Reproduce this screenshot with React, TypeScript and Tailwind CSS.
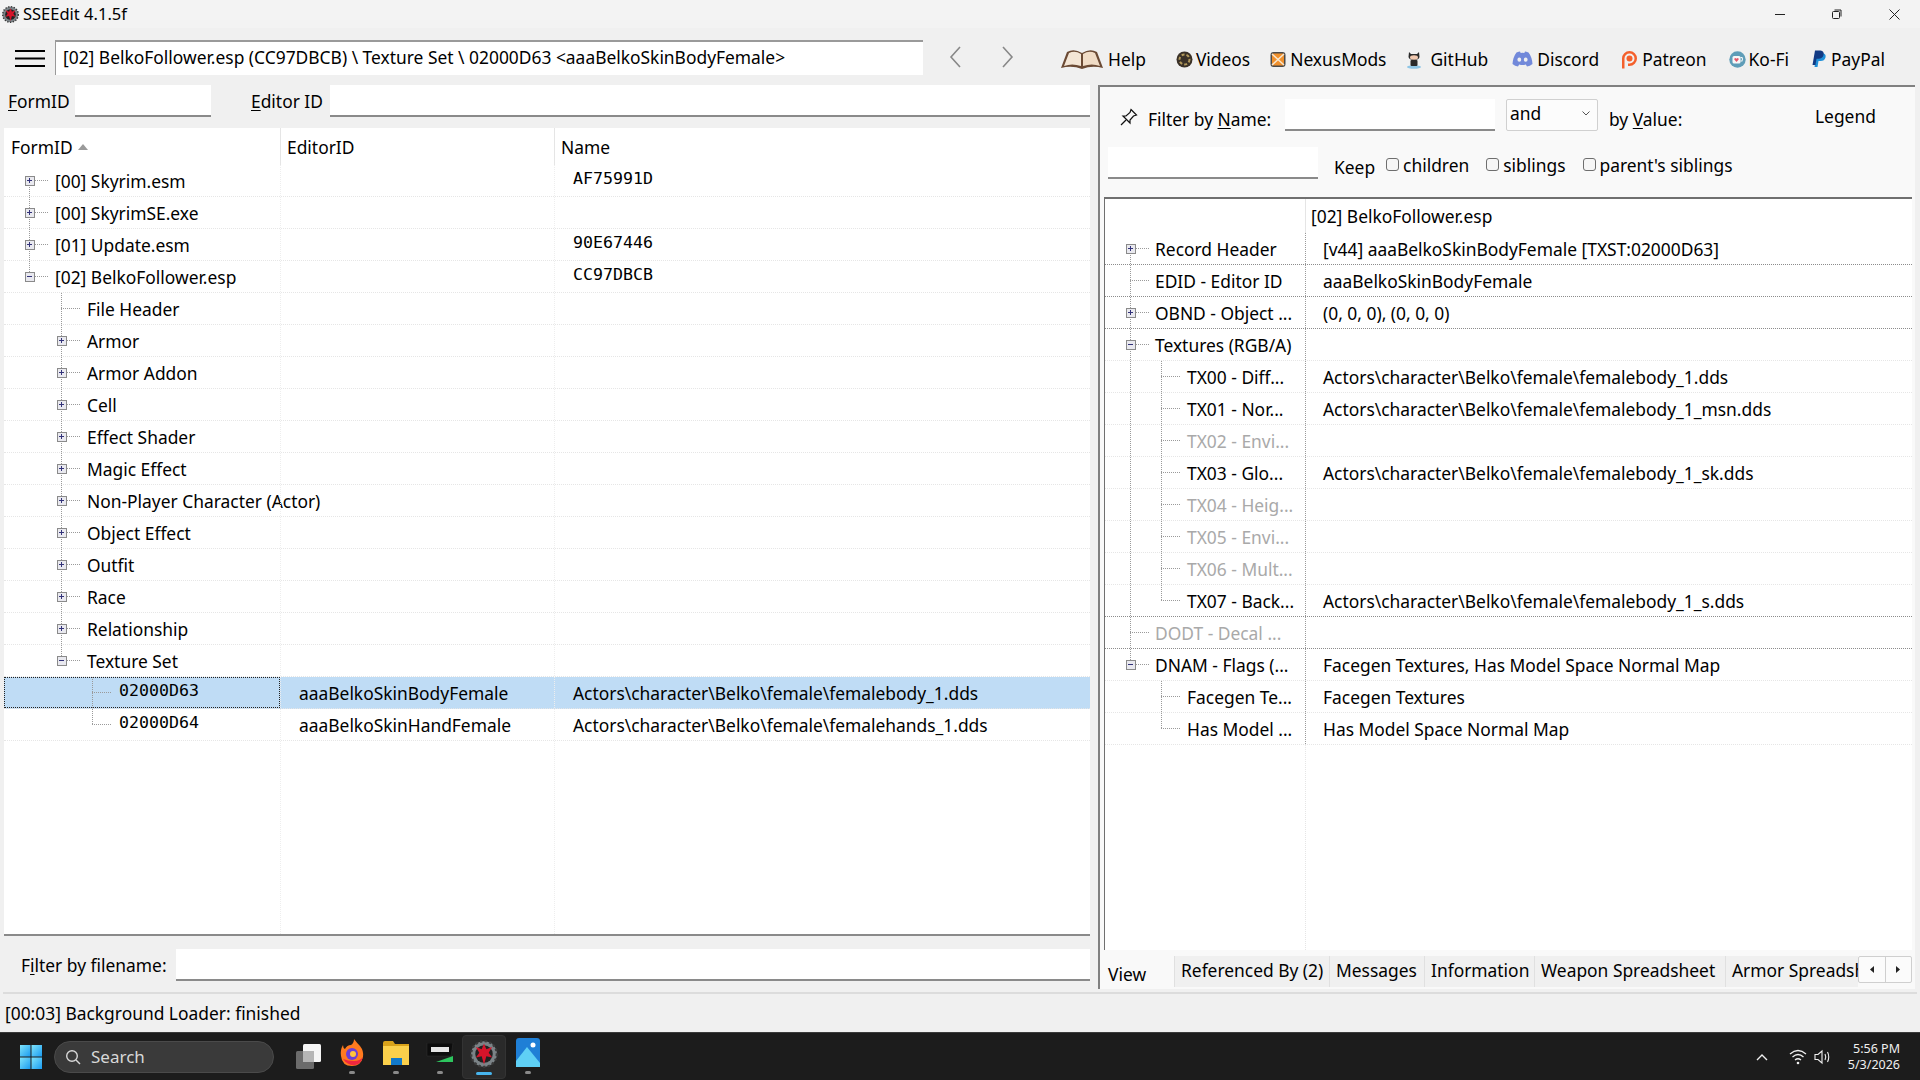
import type { ReactNode } from 'react';

const FONT = "font-['Noto_Sans','Open_Sans',sans-serif]";

type NodeRow = {
  label: string;
  node: number;
  box?: '+' | '-';
  up?: boolean;
  down?: boolean;
  trunk?: number[];
  editor?: string;
  value?: string;
  mono?: boolean;
  dim?: boolean;
  strong?: boolean;
  selected?: boolean;
};

const LEFT_ROWS: NodeRow[] = [
  { label: '[00] Skyrim.esm', node: 25, box: '+', down: true, value: 'AF75991D', mono: true },
  { label: '[00] SkyrimSE.exe', node: 25, box: '+', up: true, down: true },
  { label: '[01] Update.esm', node: 25, box: '+', up: true, down: true, value: '90E67446', mono: true },
  { label: '[02] BelkoFollower.esp', node: 25, box: '-', up: true, value: 'CC97DBCB', mono: true },
  { label: 'File Header', node: 57, up: true, down: true },
  { label: 'Armor', node: 57, box: '+', up: true, down: true },
  { label: 'Armor Addon', node: 57, box: '+', up: true, down: true },
  { label: 'Cell', node: 57, box: '+', up: true, down: true },
  { label: 'Effect Shader', node: 57, box: '+', up: true, down: true },
  { label: 'Magic Effect', node: 57, box: '+', up: true, down: true },
  { label: 'Non-Player Character (Actor)', node: 57, box: '+', up: true, down: true },
  { label: 'Object Effect', node: 57, box: '+', up: true, down: true },
  { label: 'Outfit', node: 57, box: '+', up: true, down: true },
  { label: 'Race', node: 57, box: '+', up: true, down: true },
  { label: 'Relationship', node: 57, box: '+', up: true, down: true },
  { label: 'Texture Set', node: 57, box: '-', up: true },
];

const RIGHT_ROWS: NodeRow[] = [
  { label: 'Record Header', node: 25, box: '+', down: true, strong: true, value: '[v44] aaaBelkoSkinBodyFemale [TXST:02000D63]' },
  { label: 'EDID - Editor ID', node: 25, up: true, down: true, strong: true, value: 'aaaBelkoSkinBodyFemale' },
  { label: 'OBND - Object ...', node: 25, box: '+', up: true, down: true, strong: true, value: '(0, 0, 0), (0, 0, 0)' },
  { label: 'Textures (RGB/A)', node: 25, box: '-', up: true, down: true },
  { label: 'TX00 - Diff...', node: 56, up: true, down: true, trunk: [25], value: 'Actors\\character\\Belko\\female\\femalebody_1.dds' },
  { label: 'TX01 - Nor...', node: 56, up: true, down: true, trunk: [25], value: 'Actors\\character\\Belko\\female\\femalebody_1_msn.dds' },
  { label: 'TX02 - Envi...', node: 56, up: true, down: true, trunk: [25], dim: true },
  { label: 'TX03 - Glo...', node: 56, up: true, down: true, trunk: [25], value: 'Actors\\character\\Belko\\female\\femalebody_1_sk.dds' },
  { label: 'TX04 - Heig...', node: 56, up: true, down: true, trunk: [25], dim: true },
  { label: 'TX05 - Envi...', node: 56, up: true, down: true, trunk: [25], dim: true },
  { label: 'TX06 - Mult...', node: 56, up: true, down: true, trunk: [25], dim: true },
  { label: 'TX07 - Back...', node: 56, up: true, trunk: [25], strong: true, value: 'Actors\\character\\Belko\\female\\femalebody_1_s.dds' },
  { label: 'DODT - Decal ...', node: 25, up: true, down: true, dim: true, strong: true },
  { label: 'DNAM - Flags (...', node: 25, box: '-', up: true, value: 'Facegen Textures, Has Model Space Normal Map' },
  { label: 'Facegen Te...', node: 56, up: true, down: true, value: 'Facegen Textures' },
  { label: 'Has Model ...', node: 56, up: true, value: 'Has Model Space Normal Map' },
];

function Gutter({ row, width }: { row: NodeRow; width: number }) {
  const { node, box, up, down, trunk } = row;
  return (
    <svg width={width} height={32} className="shrink-0" shapeRendering="crispEdges">
      <g stroke="#9a9a9a" strokeDasharray="1 1" fill="none">
        {trunk?.map(x => <line key={x} x1={x + 0.5} x2={x + 0.5} y1={0} y2={32} />)}
        {up && <line x1={node + 0.5} x2={node + 0.5} y1={0} y2={16} />}
        {down && <line x1={node + 0.5} x2={node + 0.5} y1={16} y2={32} />}
        <line x1={node} x2={node + 20} y1={15.5} y2={15.5} />
      </g>
      {box && (
        <g>
          <rect x={node - 4} y={11} width={9} height={9} fill="#e9e9ef" stroke="#8a8a8a" />
          <line x1={node - 2} x2={node + 3} y1={15.5} y2={15.5} stroke="#33337a" />
          {box === '+' && <line x1={node + 0.5} x2={node + 0.5} y1={13} y2={18} stroke="#33337a" />}
        </g>
      )}
    </svg>
  );
}

function LeftRow({ row }: { row: NodeRow }) {
  return (
    <div className="flex h-[32px] border-b border-dotted border-[#e6e6e6]">
      <div className="flex w-[276px] shrink-0 items-center whitespace-nowrap">
        <Gutter row={row} width={row.node === 25 ? 51 : 83} />
        <span>{row.label}</span>
      </div>
      <div className="w-[274px] shrink-0 border-l border-dotted border-[#eeeeee]" />
      <div className="flex flex-1 items-center border-l border-dotted border-[#eeeeee] pl-[18px] pb-[3px] font-['DejaVu_Sans_Mono',monospace] text-[16.6px]">
        {row.value}
      </div>
    </div>
  );
}

function RecordRow({ id, editor, value, selected }: { id: string; editor: string; value: string; selected?: boolean }) {
  const gutter: NodeRow = { label: id, node: 88, up: true, down: selected };
  return (
    <div className={`flex h-[32px] border-b border-dotted border-[#e6e6e6] ${selected ? 'bg-[#bfdcf5]' : ''}`}>
      <div className={`flex w-[276px] shrink-0 items-center ${selected ? 'outline outline-1 -outline-offset-1 outline-dotted outline-[#222]' : ''}`}>
        <Gutter row={gutter} width={115} />
        <span className="pb-[3px] font-['DejaVu_Sans_Mono',monospace] text-[16.6px]">{id}</span>
      </div>
      <div className="flex w-[274px] shrink-0 items-center border-l border-dotted border-[#eeeeee] pl-[18px]">{editor}</div>
      <div className="flex flex-1 items-center border-l border-dotted border-[#eeeeee] pl-[18px]">{value}</div>
    </div>
  );
}

function ViewRow({ row }: { row: NodeRow }) {
  return (
    <div className={`flex h-[32px] border-b border-dotted ${row.strong ? 'border-[#8c8c8c]' : 'border-[#e6e6e6]'}`}>
      <div className={`flex w-[200px] shrink-0 items-center whitespace-nowrap ${row.dim ? 'text-[#a9a9a9]' : ''}`}>
        <Gutter row={row} width={row.node === 25 ? 50 : 82} />
        <span>{row.label}</span>
      </div>
      <div className="flex flex-1 items-center whitespace-nowrap border-l border-dotted border-[#9a9a9a] pl-[17px]">{row.value}</div>
    </div>
  );
}

function Checkbox({ label, className }: { label: string; className: string }) {
  return (
    <div className={`flex items-center ${className}`}>
      <span className="mb-[2px] h-[13px] w-[13px] rounded-[3px] border border-[#6e6e6e] bg-[#f6f6f6]" />
      <span className="ml-[4px]">{label}</span>
    </div>
  );
}

function ToolbarLink({ icon, label, className }: { icon: ReactNode; label: string; className: string }) {
  return (
    <div className={`flex items-center ${className}`}>
      {icon}
      <span>{label}</span>
    </div>
  );
}

function BookIcon() {
  return (
    <svg width="44" height="22" viewBox="0 0 44 22" className="mr-[4px]">
      <path d="M1 20 L7 4 Q14 0 22 5 Q30 0 37 4 L43 20 Q32 17 22 21 Q12 17 1 20Z" fill="#6b4a34" />
      <path d="M4 18 L9 5 Q15 2 21 6 L21 18 Q12 15 4 18Z" fill="#f4e6d6" />
      <path d="M40 18 L35 5 Q29 2 23 6 L23 18 Q32 15 40 18Z" fill="#f0dcc6" />
    </svg>
  );
}

function GpIcon() {
  return (
    <svg width="17" height="17" viewBox="0 0 17 17" className="mr-[3px]">
      <circle cx="8.5" cy="8.5" r="8" fill="#3a3128" />
      <circle cx="8.5" cy="8.5" r="5" fill="none" stroke="#b39a5c" strokeWidth="2" strokeDasharray="3 2" />
    </svg>
  );
}

function NexusIcon() {
  return (
    <svg width="16" height="17" viewBox="0 0 16 17" className="mr-[4px]">
      <rect x="0.5" y="1" width="15" height="15" rx="3" fill="#4a4a4a" />
      <rect x="2" y="2.5" width="12" height="12" rx="1" fill="#f0902c" />
      <path d="M2 3 L8 8.5 L14 3 M2 14 L8 8.5 L14 14" stroke="#f7e6cf" strokeWidth="1.6" fill="none" />
    </svg>
  );
}

function GithubIcon() {
  return (
    <svg width="20" height="20" viewBox="0 0 20 20" className="mr-[6px]">
      <ellipse cx="10" cy="18" rx="7" ry="1.8" fill="#8fc6e6" />
      <path d="M5 3 L7 5 H13 L15 3 L15.5 8 Q15 11 10 11 Q5 11 4.5 8Z" fill="#2a2a2a" />
      <ellipse cx="10" cy="8.5" rx="4" ry="2.2" fill="#f1c9b0" />
      <rect x="6.5" y="11" width="7" height="6" rx="1" fill="#2a2a2a" />
    </svg>
  );
}

function DiscordIcon() {
  return (
    <svg width="21" height="16" viewBox="0 0 21 16" className="mr-[4px]">
      <path d="M4.5 1.5 Q7 .5 8 .5 L8.7 2 Q10.5 1.7 12.3 2 L13 .5 Q14 .5 16.5 1.5 Q20 6 20.5 13 Q18 15 15 15.5 L13.8 13.5 Q10.5 14.5 7.2 13.5 L6 15.5 Q3 15 .5 13 Q1 6 4.5 1.5Z" fill="#7289da" />
      <ellipse cx="7.3" cy="8.7" rx="1.9" ry="2.1" fill="#f0f0f0" />
      <ellipse cx="13.7" cy="8.7" rx="1.9" ry="2.1" fill="#f0f0f0" />
    </svg>
  );
}

function PatreonIcon() {
  return (
    <svg width="17" height="19" viewBox="0 0 17 19" className="mr-[4px]">
      <path d="M1 18.5 V8.5 A7.5 7.5 0 1 1 8.5 16 H7 V13.5 H8.5 A5 5 0 1 0 3.5 8.5 V18.5Z" fill="#f4602c" />
      <circle cx="8.5" cy="8.5" r="3" fill="#f4602c" />
    </svg>
  );
}

function KofiIcon() {
  return (
    <svg width="17" height="17" viewBox="0 0 17 17" className="mr-[3px]">
      <circle cx="8.5" cy="8.5" r="8.2" fill="#5f9db8" />
      <rect x="3.5" y="5" width="8" height="7.5" rx="1.5" fill="#f7f7f7" />
      <path d="M11.5 6.5 H13 Q14.2 8.5 13 10 H11.5" stroke="#f7f7f7" strokeWidth="1.2" fill="none" />
      <path d="M7.5 11 L5.3 8.6 Q5 7 6.4 7 L7.5 7.8 L8.6 7 Q10 7 9.7 8.6Z" fill="#e5566a" />
    </svg>
  );
}

function PaypalIcon() {
  return (
    <svg width="15" height="18" viewBox="0 0 15 18" className="mr-[4px]">
      <path d="M5 3 H10 Q14.5 3.5 13.5 7.5 Q12.5 11 8.5 11 H6.5 L5.5 17 H2.5Z" fill="#1f8fd8" />
      <path d="M3 0.5 H8.5 Q12.5 1 11.5 5 Q10.5 8.8 6.5 8.8 H4.5 L3.5 15 H0.5Z" fill="#123a84" />
    </svg>
  );
}

function AppIcon({ size }: { size: number }) {
  return (
    <svg width={size} height={size} viewBox="0 0 24 24">
      <circle cx="12" cy="12" r="11" fill="#7b8387" />
      <circle cx="12" cy="12" r="11" fill="none" stroke="#3a3a3a" strokeWidth="2" strokeDasharray="2 2" />
      <circle cx="12" cy="12" r="7.5" fill="#222" />
      <path d="M12 3 L14 8 L19 6 L16 11 L19 15 L14 14 L12 21 L10 14 L5 15 L8 11 L5 6 L10 8Z" fill="#d6142a" />
    </svg>
  );
}

function Taskbar() {
  return (
    <div className="flex h-[48px] shrink-0 items-center border-t border-[#3a3a3a] bg-[#1c1c1c] text-white">
      <svg width="20" height="0" className="shrink-0" />
      <svg width="22" height="24" viewBox="0 0 22 24" className="mb-[0px] shrink-0">
        <defs>
          <linearGradient id="win" x1="0" y1="0" x2="1" y2="1">
            <stop offset="0" stopColor="#7fe4fb" />
            <stop offset="1" stopColor="#1a9bf0" />
          </linearGradient>
        </defs>
        <rect x="0" y="0" width="10.5" height="11.5" fill="url(#win)" />
        <rect x="11.5" y="0" width="10.5" height="11.5" fill="url(#win)" />
        <rect x="0" y="12.5" width="10.5" height="11.5" fill="url(#win)" />
        <rect x="11.5" y="12.5" width="10.5" height="11.5" fill="url(#win)" />
      </svg>
      <div className="ml-[12px] flex h-[32px] w-[220px] shrink-0 items-center rounded-full border border-[#4a4a4a] bg-[#3a3a3a] pl-[10px] text-[17px] text-[#d8d8d8]">
        <svg width="16" height="16" viewBox="0 0 16 16" fill="none" stroke="#d8d8d8" strokeWidth="1.4">
          <circle cx="7" cy="7" r="5.3" />
          <path d="M11 11 L15 15" />
        </svg>
        <span className="ml-[10px]">Search</span>
      </div>
      {/* task view */}
      <div className="ml-[12px] flex h-[44px] w-[44px] shrink-0 items-center justify-center">
        <svg width="25" height="25" viewBox="0 0 25 25">
          <rect x="0" y="7" width="18" height="18" rx="1.5" fill="#6b6b6b" />
          <rect x="7" y="0" width="18" height="18" rx="1.5" fill="#f5f5f5" />
          <rect x="7" y="7" width="11" height="11" fill="#b5b5b5" />
        </svg>
      </div>
      <TaskItem>
        <svg width="24" height="28" viewBox="0 0 24 28">
          <path d="M14 0 Q17 4 20 7 Q24 12 23 18 Q21 27 12 27 Q2 27 1 17 Q0 11 3 6 Q3 9 5 10 Q7 6 11 6 Q14 4 14 0Z" fill="#ff7a1f" />
          <path d="M3 20 Q8 27 15 26 Q21 25 23 18 Q20 22 14 22 Q8 22 3 20Z" fill="#f0273f" />
          <circle cx="12" cy="15" r="6" fill="#6a3fd6" />
          <circle cx="13" cy="15" r="3" fill="#ffc43c" />
        </svg>
      </TaskItem>
      <TaskItem>
        <svg width="26" height="24" viewBox="0 0 26 24">
          <path d="M0 2 Q0 0 2 0 H10 L12 3 H26 V10 H0Z" fill="#d9a21a" />
          <rect x="0" y="5" width="26" height="19" fill="#fbd04b" />
          <rect x="8" y="17" width="11" height="7" fill="#1279c9" />
        </svg>
      </TaskItem>
      <TaskItem>
        <svg width="28" height="20" viewBox="0 0 28 20">
          <path d="M1 0 H27 L25 13 L1 13Z" fill="#0d0d0d" stroke="#333" strokeWidth="0.5" />
          <rect x="5" y="4" width="18" height="5" fill="#e6e6e6" />
          <path d="M10 19 L27 13 V19Z" fill="#2dc55e" />
        </svg>
      </TaskItem>
      <TaskItem active>
        <AppIcon size={28} />
      </TaskItem>
      <TaskItem>
        <svg width="24" height="29" viewBox="0 0 24 29">
          <rect width="24" height="29" rx="3" fill="#1f7fd6" />
          <path d="M0 23 L11 9 L24 25 V29 H0Z" fill="#5fd0f5" />
          <circle cx="17" cy="7" r="2.5" fill="#ffffff" />
        </svg>
      </TaskItem>
      <div className="flex-1" />
      <svg width="12" height="8" viewBox="0 0 12 8" fill="none" stroke="#f0f0f0" strokeWidth="1.4">
        <path d="M1 7 L6 2 L11 7" />
      </svg>
      <svg width="18" height="16" viewBox="0 0 18 16" fill="none" stroke="#f0f0f0" strokeWidth="1.3" className="ml-[21px]">
        <path d="M1 5 Q9 -2 17 5 M3.5 8 Q9 3 14.5 8 M6 11 Q9 8.5 12 11" />
        <circle cx="9" cy="14" r="1.3" fill="#f0f0f0" stroke="none" />
      </svg>
      <svg width="18" height="16" viewBox="0 0 18 16" fill="none" stroke="#f0f0f0" strokeWidth="1.1" className="ml-[7px]">
        <path d="M1 5.5 H4 L8 2 V14 L4 10.5 H1Z M11 5 Q12.5 8 11 11 M13.5 3 Q16 8 13.5 13" />
      </svg>
      <div className="ml-[16px] mr-[20px] flex flex-col items-end text-[12.5px] leading-[16px] text-[#f0f0f0]">
        <span>5:56 PM</span>
        <span>5/3/2026</span>
      </div>
    </div>
  );
}

function TaskItem({ children, active }: { children: ReactNode; active?: boolean }) {
  return (
    <div className={`flex h-[44px] w-[44px] shrink-0 flex-col items-center rounded-[4px] ${active ? 'border border-[#333] bg-[#2a2a2a]' : ''}`}>
      <div className="flex h-[36px] items-center">{children}</div>
      <span className={`h-[3px] rounded-full ${active ? 'w-[16px] bg-[#47b5ee]' : 'w-[6px] bg-[#8a8a8a]'}`} />
    </div>
  );
}

export default function App() {
  return (
    <div className={`flex h-[1080px] w-[1920px] flex-col overflow-hidden bg-[#f0f0f0] text-[17.4px] leading-[24px] text-black ${FONT}`}>
      {/* Title bar */}
      <div className="flex h-[28px] shrink-0 items-center bg-[#f3f3f3] pl-[2px]">
        <AppIcon size={17} />
        <span className="ml-[4px] text-[16.5px]">SSEEdit 4.1.5f</span>
        <div className="flex-1" />
        <div className="mr-[20px] flex items-center gap-[47px]">
          <svg width="10" height="10" viewBox="0 0 10 10" stroke="#222" fill="none"><path d="M0 5.5 H10" /></svg>
          <svg width="10" height="10" viewBox="0 0 10 10" stroke="#222" fill="none"><rect x="0.5" y="2.5" width="7" height="7" rx="1" /><path d="M2.5 1 H9 V7.5" /></svg>
          <svg width="11" height="11" viewBox="0 0 11 11" stroke="#222" fill="none"><path d="M.5 .5 L10.5 10.5 M10.5 .5 L.5 10.5" /></svg>
        </div>
      </div>

      {/* Toolbar */}
      <div className="flex h-[52px] shrink-0 items-start pt-[12px]">
        <svg width="30" height="17" viewBox="0 0 30 17" className="ml-[15px] mt-[10px] shrink-0">
          <path d="M0 1 H30 M0 8.5 H30 M0 16 H30" stroke="#000" strokeWidth="2" />
        </svg>
        <div className="ml-[10px] flex h-[35px] w-[868px] shrink-0 items-center border-t-2 border-l border-[#9a9a9a] bg-white pb-[3px] pl-[7px]">
          [02] BelkoFollower.esp (CC97DBCB) \ Texture Set \ 02000D63 &lt;aaaBelkoSkinBodyFemale&gt;
        </div>
        <svg width="12" height="22" viewBox="0 0 12 22" fill="none" stroke="#888" strokeWidth="1.6" className="ml-[26px] mt-[6px] shrink-0"><path d="M11 1 L2 11 L11 21" /></svg>
        <svg width="12" height="22" viewBox="0 0 12 22" fill="none" stroke="#888" strokeWidth="1.6" className="ml-[41px] mt-[6px] shrink-0"><path d="M1 1 L10 11 L1 21" /></svg>
        <div className="mt-[1px] ml-[46px] flex h-[36px] items-center">
          <ToolbarLink icon={<BookIcon />} label="Help" />
          <ToolbarLink icon={<GpIcon />} label="Videos" className="ml-[30px]" />
          <ToolbarLink icon={<NexusIcon />} label="NexusMods" className="ml-[20px]" />
          <ToolbarLink icon={<GithubIcon />} label="GitHub" className="ml-[18px]" />
          <ToolbarLink icon={<DiscordIcon />} label="Discord" className="ml-[24px]" />
          <ToolbarLink icon={<PatreonIcon />} label="Patreon" className="ml-[22px]" />
          <ToolbarLink icon={<KofiIcon />} label="Ko-Fi" className="ml-[22px]" />
          <ToolbarLink icon={<PaypalIcon />} label="PayPal" className="ml-[23px]" />
        </div>
      </div>

      {/* Main split */}
      <div className="flex min-h-0 flex-1 pt-[5px]">
        {/* Left pane */}
        <div className="flex w-[1090px] shrink-0 flex-col">
          <div className="flex h-[32px] shrink-0 items-center pl-[8px]">
            <span className="w-[67px] shrink-0"><u className="underline-offset-2">F</u>ormID</span>
            <div className="h-[32px] w-[136px] shrink-0 border-b-2 border-[#8a8a8a] bg-white" />
            <span className="ml-[40px] w-[79px] shrink-0"><u className="underline-offset-2">E</u>ditor ID</span>
            <div className="h-[32px] flex-1 border-b-2 border-[#8a8a8a] bg-white" />
          </div>
          <div className="mt-[11px] ml-[4px] flex min-h-0 flex-1 flex-col border-b-2 border-[#8a8a8a] bg-white">
            <div className="flex h-[37px] shrink-0">
              <div className="flex w-[276px] shrink-0 items-center pl-[7px]">
                FormID
                <svg width="10" height="6" viewBox="0 0 10 6" className="ml-[5px]"><path d="M5 0 L10 6 H0Z" fill="#9a9a9a" /></svg>
              </div>
              <div className="flex w-[274px] shrink-0 items-center border-l border-[#e5e5e5] pl-[6px]">EditorID</div>
              <div className="flex flex-1 items-center border-l border-[#e5e5e5] pl-[6px]">Name</div>
            </div>
            {LEFT_ROWS.map(row => <LeftRow key={row.label} row={row} />)}
            <RecordRow id="02000D63" editor="aaaBelkoSkinBodyFemale" value="Actors\character\Belko\female\femalebody_1.dds" selected />
            <RecordRow id="02000D64" editor="aaaBelkoSkinHandFemale" value="Actors\character\Belko\female\femalehands_1.dds" />
            <div className="flex min-h-0 flex-1">
              <div className="w-[276px] shrink-0" />
              <div className="w-[274px] shrink-0 border-l border-dotted border-[#eeeeee]" />
              <div className="flex-1 border-l border-dotted border-[#eeeeee]" />
            </div>
          </div>
          <div className="flex h-[32px] shrink-0 items-center my-[13px] mb-[11px] pl-[21px]">
            <span className="w-[155px] shrink-0">F<u className="underline-offset-2">i</u>lter by filename:</span>
            <div className="h-[32px] flex-1 border-b-2 border-[#8a8a8a] bg-white" />
          </div>
        </div>

        {/* Right pane */}
        <div className="ml-[8px] mb-[3px] flex w-[817px] shrink-0 flex-col border-t-2 border-l-2 border-[#808080] bg-[#f9f9f9]">
          <div className="flex h-[44px] shrink-0 items-end">
            <svg width="18" height="18" viewBox="0 0 18 18" fill="none" stroke="#111" strokeWidth="1.2" className="ml-[20px] mb-[5px] shrink-0">
              <path d="M11 1.5 L16.5 7 L13.5 8 L10 12 L10 15 L3 8 L6 8 L10 4.5Z" />
              <path d="M6 12 L1 17" />
            </svg>
            <span className="ml-[10px] w-[137px] shrink-0">Filter by <u className="underline-offset-2">N</u>ame:</span>
            <div className="h-[32px] w-[210px] shrink-0 border-b-2 border-[#8a8a8a] bg-white" />
            <div className="ml-[11px] flex h-[32px] w-[92px] shrink-0 items-center justify-between rounded-[2px] border border-[#d0d0d0] bg-[#fcfcfc] pb-[4px] pl-[3px] pr-[7px]">
              and
              <svg width="8" height="5" viewBox="0 0 8 5" fill="none" stroke="#555"><path d="M.5 .5 L4 4 L7.5 .5" /></svg>
            </div>
            <span className="ml-[11px] w-[206px] shrink-0">by <u className="underline-offset-2">V</u>alue:</span>
            <span className="pb-[3px]">Legend</span>
          </div>
          <div className="flex h-[48px] shrink-0 items-end pl-[8px]">
            <div className="h-[32px] w-[210px] shrink-0 border-b-2 border-[#8a8a8a] bg-white" />
            <span className="ml-[16px]">Keep</span>
            <Checkbox label="children" className="ml-[11px] mb-[2px]" />
            <Checkbox label="siblings" className="ml-[17px] mb-[2px]" />
            <Checkbox label="parent's siblings" className="ml-[17px] mb-[2px]" />
          </div>
          <div className="mt-[18px] ml-[4px] mr-[3px] flex min-h-0 flex-1 flex-col border-t-2 border-l border-[#707070] bg-white">
            <div className="flex h-[34px] shrink-0">
              <div className="w-[200px] shrink-0" />
              <div className="flex flex-1 items-center border-l border-[#e5e5e5] pl-[5px]">[02] BelkoFollower.esp</div>
            </div>
            {RIGHT_ROWS.map(row => <ViewRow key={row.label} row={row} />)}
            <div className="flex min-h-0 flex-1">
              <div className="w-[200px] shrink-0" />
              <div className="flex-1 border-l border-dotted border-[#e5e5e5]" />
            </div>
          </div>
          {/* Tabs */}
          <div className="mt-[6px] flex h-[33px] shrink-0 items-start pl-[4px]">
            <div className="flex h-[33px] w-[70px] shrink-0 items-center bg-[#f9f9f9] pl-[4px] pt-[2px]">View</div>
            <TabLabel label="Referenced By (2)" className="w-[155px]" />
            <TabLabel label="Messages" className="w-[95px]" />
            <TabLabel label="Information" className="w-[110px]" />
            <TabLabel label="Weapon Spreadsheet" className="w-[191px]" />
            <div className="flex h-[31px] w-[133px] shrink-0 items-center overflow-hidden whitespace-nowrap border-l border-[#e0e0e0] bg-[#f0f0f0] pb-[3px] pl-[6px]">Armor Spreadsheet</div>
            <div className="flex h-[27px] w-[54px] shrink-0 rounded-[2px] border border-[#cfcfcf] bg-[#fbfbfb]">
              <div className="flex flex-1 items-center justify-center border-r border-[#cfcfcf]"><svg width="4" height="7" viewBox="0 0 4 7"><path d="M4 0 V7 L0 3.5Z" fill="#222" /></svg></div>
              <div className="flex flex-1 items-center justify-center"><svg width="4" height="7" viewBox="0 0 4 7"><path d="M0 0 V7 L4 3.5Z" fill="#222" /></svg></div>
            </div>
          </div>
        </div>
      </div>

      {/* Status bar */}
      <div className="mx-[3px] flex h-[40px] shrink-0 items-center border-t-2 border-[#dcdcdc] pl-[2px]">[00:03] Background Loader: finished</div>

      <Taskbar />
    </div>
  );
}

function TabLabel({ label, className }: { label: string; className: string }) {
  return (
    <div className={`flex h-[31px] shrink-0 items-center whitespace-nowrap border-l border-[#e0e0e0] bg-[#f0f0f0] pb-[3px] pl-[6px] ${className}`}>{label}</div>
  );
}
